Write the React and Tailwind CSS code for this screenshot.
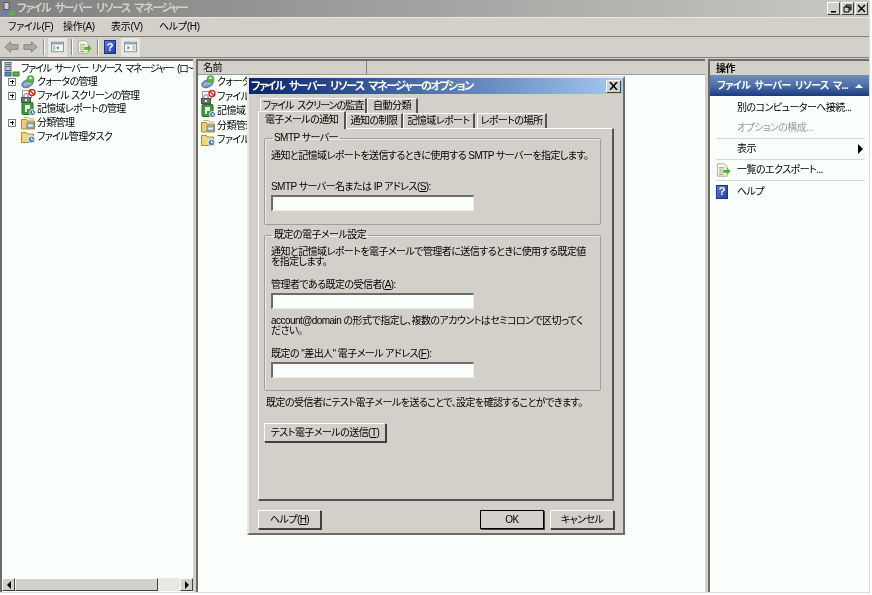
const bevel = "border border-t-white border-l-white border-r-[#404040] border-b-[#404040] bg-[#d2d0c8]";
const sunken = "border border-t-[#6c6c68] border-l-[#6c6c68] border-r-[#ecebe6] border-b-[#ecebe6] bg-[#fbfffb]";
const jp = "font-['Liberation_Sans','Noto_Sans_CJK_JP',sans-serif] [font-feature-settings:'palt'] tracking-[-0.55px]";

function GrayArrow({ flip }) {
  return (
    <svg width="15" height="14" viewBox="0 0 16 14" className={flip ? "-scale-x-100" : ""}>
      <path d="M1 7 7 1.500V4.500H15V9.500H7V12.500Z" fill="#aaa9a2" stroke="#84837c" />
    </svg>
  );
}

function PaneIcon({ right }) {
  return (
    <svg width="13" height="14" viewBox="0 0 15 14">
      <rect x="0.500" y="1.500" width="14" height="11" fill="#f3f6f6" stroke="#7c8a94" />
      <rect x="1" y="2" width="13" height="2" fill="#8ea3b3" />
      <rect x={right ? 10 : 2} y="5" width="3" height="6" fill="#bcc7cc" />
      <path d={right ? "M4 6v4l3-2z" : "M9 6v4l-3-2z"} fill="#3d9a3d" />
    </svg>
  );
}

function ExportIcon() {
  return (
    <svg width="15" height="14" viewBox="0 0 17 15">
      <path d="M1.500.5h8l3 3v11h-11z" fill="#f8f6e6" stroke="#a8a480" />
      <path d="M3.500 5h6M3.500 7.500h4M3.500 10h4M3.500 12.500h5" stroke="#8a8a70" />
      <path d="M8 7.500h4.500V5l4 4-4 4v-2.500H8z" fill="#4fb52f" />
    </svg>
  );
}

function HelpIcon() {
  return (
    <div className="flex h-[14px] w-[12px] items-center justify-center border border-[#20308a] bg-gradient-to-br from-[#5d78d8] to-[#2a3fa8] text-[11px] font-bold tracking-normal text-white">
      ?
    </div>
  );
}

function NodeIcon({ kind }) {
  if (kind === "quota") {
    return (
      <svg width="15" height="14" viewBox="0 0 15 14" className="shrink-0">
        <path d="M1 8.500c1-3 8-5 11-3 1 2-1 6-6 7-3 1-6-1-5-4z" fill="#7f9cc4" stroke="#50688c" />
        <path d="M3 10c2-1 5-2 7-2" stroke="#dbe5f0" />
        <circle cx="9.500" cy="4" r="3.500" fill="#57b83e" stroke="#3b8a2a" strokeWidth=".5" />
        <path d="M9.500 1.500l2 2.500h-4z" fill="#e8f6df" />
      </svg>
    );
  }
  if (kind === "screen") {
    return (
      <svg width="15" height="14" viewBox="0 0 15 14" className="shrink-0">
        <rect x="1.500" y="1.500" width="9" height="7" fill="#fbfbf8" stroke="#9a9a98" />
        <rect x="0.500" y="8.500" width="9" height="5" fill="#6f7275" stroke="#4a4d50" />
        <path d="M3 8.500V6.500c0-2.500 4-2.500 4 0v2" fill="none" stroke="#5d6063" />
        <rect x="4" y="10" width="2" height="2" fill="#e6e6e0" />
        <circle cx="11" cy="3.500" r="3" fill="#fff" stroke="#d0281e" strokeWidth="1.500" />
        <path d="M9 1.500l4 4" stroke="#d0281e" strokeWidth="1.500" />
      </svg>
    );
  }
  if (kind === "report") {
    return (
      <svg width="15" height="14" viewBox="0 0 15 14" className="shrink-0">
        <rect x="1" y="0.500" width="11" height="12" rx="1" fill="#3f9a3a" stroke="#24702a" />
        <path d="M4 3h5v4H6v3H4z" fill="#eaf5e2" />
        <circle cx="11.500" cy="10.500" r="3" fill="#4a7dbc" stroke="#f4f8fa" />
        <path d="M11.500 9v2h1.500" stroke="#fff" fill="none" />
      </svg>
    );
  }
  if (kind === "class") {
    return (
      <svg width="15" height="14" viewBox="0 0 15 14" className="shrink-0">
        <path d="M.5 3.500h5l1 1.500h7v8h-13z" fill="#e8cd7a" stroke="#a98d3b" />
        <path d="M2.500 1.500h5l1 1.500h5" fill="none" stroke="#c9ad58" />
        <rect x="6" y="7" width="7" height="5" fill="#b8c6cf" stroke="#6f7f8a" />
        <path d="M7.500 9.500h4" stroke="#fff" />
      </svg>
    );
  }
  return (
    <svg width="15" height="14" viewBox="0 0 15 14" className="shrink-0">
      <path d="M.5 2.500h5l1 1.500h6v8.500h-12z" fill="#f0d77e" stroke="#a98d3b" />
      <circle cx="10.500" cy="9.500" r="3.500" fill="#4f84c0" stroke="#f4f8fa" />
      <path d="M10.500 7.500v2.200h2" stroke="#fff" fill="none" />
    </svg>
  );
}

function Expander() {
  return (
    <div className="relative h-[8px] w-[8px] border border-[#808080] bg-white">
      <div className="absolute top-[2.500px] left-[1px] h-px w-[4px] bg-black" />
      <div className="absolute top-[1px] left-[2.500px] h-[4px] w-px bg-black" />
    </div>
  );
}

const treeRows = [
  { kind: "quota", label: "クォータの管理", expand: true },
  { kind: "screen", label: "ファイル スクリーンの管理", expand: true },
  { kind: "report", label: "記憶域レポートの管理" },
  { kind: "class", label: "分類管理", expand: true },
  { kind: "task", label: "ファイル管理タスク" },
];

function TreePane() {
  return (
    <div className="flex w-[193px] shrink-0 flex-col overflow-hidden border-l-2 border-t-2 border-[#6c6c68] bg-[#fbfffb]">
      <div className="flex h-[14px] items-center pt-[2px] pl-[2px]">
        <svg width="16" height="15" viewBox="0 0 16 15" className="shrink-0">
          <rect x="1" y="0.500" width="6" height="8" fill="#b9c6d2" stroke="#5b6a78" />
          <path d="M2 2.500h4M2 4.500h4" stroke="#5b6a78" />
          <rect x="1" y="10" width="6" height="4" fill="#5d87b8" stroke="#3d5b80" />
          <rect x="9" y="10" width="6" height="4" fill="#5fae4d" stroke="#3d7e32" />
        </svg>
        <span className="ml-[1px] whitespace-nowrap text-[10px] leading-none tracking-[-1.2px] text-black [word-spacing:2px]">ファイル サーバー リソース マネージャー (ロ~</span>
      </div>
      <div className="flex flex-col tracking-[-0.7px]">
        {treeRows.map((row) => (
          <div key={row.label} className="flex h-[13.700px] items-center">
            <div className="ml-[6px] w-[13px] shrink-0">{row.expand && <Expander />}</div>
            <NodeIcon kind={row.kind} />
            <span className="ml-[1px] whitespace-nowrap text-[10px] leading-none text-black">{row.label}</span>
          </div>
        ))}
      </div>
      <div className="mt-auto mb-[1px] flex h-[13px] items-stretch bg-[#e8e7e2]">
        <div className={`${bevel} flex w-[13px] items-center justify-center`}>
          <div className="h-0 w-0 border-y-[4px] border-r-[4px] border-y-transparent border-r-black" />
        </div>
        <div className={`${bevel} w-[143px]`} />
        <div className="flex-1" />
        <div className={`${bevel} flex w-[13px] items-center justify-center`}>
          <div className="h-0 w-0 border-y-[4px] border-l-[4px] border-y-transparent border-l-black" />
        </div>
      </div>
    </div>
  );
}

function ListPane() {
  return (
    <div className="flex w-[509px] shrink-0 flex-col overflow-hidden border-l-2 border-t-2 border-[#6c6c68] bg-[#fbfffb]">
      <div className="flex h-[14px] shrink-0 border-b border-[#9b9a94] bg-[#d2d0c8] text-[10px] leading-none">
        <div className="flex w-[169px] items-center border-r border-[#808080] pl-[5px]">名前</div>
        <div className="flex-1" />
      </div>
      <div className="flex flex-col pl-[3px]">
        {["quota", "screen", "report", "class", "task"].map((kind, i) => (
          <div key={kind} className="flex h-[14.500px] items-center">
            <NodeIcon kind={kind} />
            <span className="ml-[1px] whitespace-nowrap text-[10px] leading-none">{["クォータの管理", "ファイル スクリーン", "記憶域レポート", "分類管理", "ファイル管理タスク"][i]}</span>
          </div>
        ))}
      </div>
    </div>
  );
}

function ActionRow({ icon, label, gray, arrow, line }) {
  return (
    <div className={`flex h-[21px] items-center ${line ? "border-b border-[#d8d7d2]" : ""}`}>
      <div className="flex w-[21px] shrink-0">{icon}</div>
      <span className={`whitespace-nowrap text-[10px] leading-none ${gray ? "text-[#9a9a9a]" : "text-black"}`}>{label}</span>
      {arrow && <div className="mr-[2px] ml-auto h-0 w-0 border-y-[5px] border-l-[5px] border-y-transparent border-l-black" />}
    </div>
  );
}

function ActionPane() {
  return (
    <div className="flex flex-1 flex-col overflow-hidden border-l-2 border-t-2 border-[#6c6c68] bg-[#fbfffb]">
      <div className="flex h-[14px] shrink-0 items-center bg-[#d2d0c8] pt-[2px] pl-[6px] text-[10px] leading-none font-bold">操作</div>
      <div className="flex h-[21px] shrink-0 items-center bg-gradient-to-b from-[#6d8fc0] via-[#4d6fa8] to-[#1c3a80] pl-[7px] text-[10px] leading-none font-bold tracking-[-0.6px] text-white [word-spacing:2px]">
        <span className="whitespace-nowrap">ファイル サーバー リソース マ...</span>
        <div className="mr-[6px] ml-auto h-0 w-0 border-x-[4px] border-b-[4px] border-x-transparent border-b-white" />
      </div>
      <div className="mt-[1px] flex flex-col pr-[4px] pl-[6px]">
        <ActionRow label="別のコンピューターへ接続..." />
        <ActionRow label="オプションの構成..." gray line />
        <ActionRow label="表示" arrow line />
        <ActionRow label="一覧のエクスポート..." icon={<ExportIcon />} line />
        <ActionRow label="ヘルプ" icon={<HelpIcon />} />
      </div>
    </div>
  );
}

function Tab({ label, width, active, tight }) {
  return (
    <div
      className={`flex shrink-0 items-center justify-center whitespace-nowrap border-t border-l border-r-2 border-t-white border-l-white border-r-[#555] bg-[#d2d0c8] text-[10px] leading-none ${tight ? "tracking-[-1px] [word-spacing:2px]" : ""} ${width} ${active ? "relative z-10 -mt-[2px] h-[18px] pb-[1px]" : "h-[15px]"}`}
    >
      {label}
    </div>
  );
}

function Field() {
  return <div className={`${sunken} mt-[3px] h-[16px] w-[203px] border-t-2 border-l-2`} />;
}

function Group({ title, height, className, children }) {
  return (
    <fieldset className={`rounded-[2px] border border-[#9f9e98] px-[6px] shadow-[inset_1px_1px_0_#ecebe6] ${height} ${className || ""}`}>
      <legend className="ml-[1px] px-[2px] text-[10px] leading-[12px]">{title}</legend>
      {children}
    </fieldset>
  );
}

function DialogButton({ label, width, strong }) {
  return (
    <div
      className={`flex h-[19px] items-center justify-center whitespace-nowrap border text-[10px] leading-none shadow-[1px_1px_0_#404040] ${width} ${strong ? "border-black bg-[#d2d0c8]" : bevel}`}
    >
      {label}
    </div>
  );
}

function OptionsDialog() {
  return (
    <div className="absolute top-[76px] left-[247px] flex h-[459px] w-[378px] flex-col border-2 border-t-[#e8e7e2] border-l-[#e8e7e2] border-r-[#6c6c68] border-b-[#6c6c68] bg-[#d2d0c8]">
      <div className="flex h-[16px] shrink-0 items-center bg-gradient-to-r from-[#0a246a] to-[#a6caf0] pl-[2px] text-[11px] leading-none font-bold tracking-[-1.5px] text-white [word-spacing:3px]">
        <span className="whitespace-nowrap">ファイル サーバー リソース マネージャーのオプション</span>
        <div className={`${bevel} mr-[2px] ml-auto flex h-[13px] w-[15px] items-center justify-center text-black`}>
          <svg width="9" height="8" viewBox="0 0 9 8">
            <path d="M1 0 8 8M8 0 1 8" stroke="#000" strokeWidth="1.500" />
          </svg>
        </div>
      </div>

      <div className="mt-[4px] flex flex-1 flex-col px-[9px]">
        <div className="ml-[2px] flex h-[15px] items-start">
          <Tab label="ファイル スクリーンの監査" width="w-[107px]" tight />
          <Tab label="自動分類" width="w-[51px]" />
        </div>
        <div className="flex h-[15px] items-start">
          <Tab label="電子メールの通知" width="w-[88px]" active />
          <Tab label="通知の制限" width="w-[57px]" />
          <Tab label="記憶域レポート" width="w-[72px]" />
          <div className="w-[2px]" />
          <Tab label="レポートの場所" width="w-[70px]" />
        </div>
        <div className="flex h-[373px] flex-col border border-t-white border-l-white border-r-2 border-b-2 border-r-[#555] border-b-[#555] px-[5px] pt-[3px]">
          <Group title="SMTP サーバー" height="h-[93px] w-[337px]">
            <p className="mt-[6px] whitespace-nowrap text-[10px] leading-[11px]">通知と記憶域レポートを送信するときに使用する SMTP サーバーを指定します。</p>
            <p className="mt-[20px] text-[10px] leading-[11px]">SMTP サーバー名または IP アドレス(<u>S</u>):</p>
            <Field />
          </Group>
          <Group title="既定の電子メール設定" height="h-[162px] w-[337px]" className="mt-[4px]">
            <p className="mt-[6px] text-[10px] leading-[10px]">通知と記憶域レポートを電子メールで管理者に送信するときに使用する既定値を指定します。</p>
            <p className="mt-[12px] text-[10px] leading-[11px]">管理者である既定の受信者(<u>A</u>):</p>
            <Field />
            <p className="mt-[7px] text-[10px] leading-[10px]">account@domain の形式で指定し、複数のアカウントはセミコロンで区切ってく<br />ださい。</p>
            <p className="mt-[12px] text-[10px] leading-[11px]">既定の "差出人" 電子メール アドレス(<u>F</u>):</p>
            <Field />
          </Group>
          <p className="mt-[6px] ml-[2px] whitespace-nowrap text-[10px] leading-[11px]">既定の受信者にテスト電子メールを送ることで、設定を確認することができます。</p>
          <div className="mt-[15px]">
            <DialogButton label={<span>テスト電子メールの送信(<u>T</u>)</span>} width="w-[122px]" />
          </div>
        </div>
        <div className="mt-[9px] flex">
          <DialogButton label={<span>ヘルプ(<u>H</u>)</span>} width="w-[63px]" />
          <div className="ml-auto flex gap-[6px]">
            <DialogButton label="OK" width="w-[64px]" strong />
            <DialogButton label="キャンセル" width="w-[64px]" />
          </div>
        </div>
      </div>
    </div>
  );
}

export default function App() {
  return (
    <div className={`h-[595px] w-[872px] overflow-hidden bg-white text-black blur-[0.3px] ${jp}`}>
      <div className="relative flex h-[593px] w-[870px] flex-col border-r border-b border-r-[#dcdcd8] border-b-[#dcdcd8] bg-[#d2d0c8]">
        <div className="flex h-[17px] shrink-0 items-center bg-gradient-to-r from-[#808080] to-[#c8c8c4] pl-[2px]">
          <svg width="14" height="14" viewBox="0 0 14 14">
            <rect x="2" y="0.500" width="5" height="7" fill="#c8d0d8" stroke="#505a64" />
            <rect x="1" y="9" width="5" height="4" fill="#5d87b8" />
            <rect x="8" y="9" width="5" height="4" fill="#5fae4d" />
          </svg>
          <span className="ml-[1px] whitespace-nowrap text-[11px] leading-none font-bold tracking-[-1.5px] text-[#d4d0c8] [word-spacing:3px]">ファイル サーバー リソース マネージャー</span>
          <div className="mr-[1px] ml-auto flex gap-[1px]">
            {[
              <path key="min" d="M2 7h5v1.500H2z" />,
              <path key="max" d="M3 1h5v5H7V3H3zM1 3h5v5H1z" fill="none" stroke="#000" />,
              <path key="x" d="M1 1l7 7M8 1 1 8" stroke="#000" strokeWidth="1.500" />,
            ].map((icon) => (
              <div key={icon.key} className={`${bevel} flex h-[13px] w-[13px] items-center justify-center`}>
                <svg width="9" height="9" viewBox="0 0 9 9">{icon}</svg>
              </div>
            ))}
          </div>
        </div>

        <div className="flex h-[20px] shrink-0 items-center border-y border-t-[#e8e7e2] border-b-[#808080] pl-[8px] text-[10px] leading-none tracking-[-0.3px]">
          <span className="w-[55px]">ファイル(F)</span>
          <span className="w-[48px]">操作(A)</span>
          <span className="w-[48px]">表示(V)</span>
          <span>ヘルプ(H)</span>
        </div>

        <div className="flex h-[21px] shrink-0 items-center border-b border-[#808080] pl-[4px]">
          <GrayArrow />
          <div className="ml-[4px]"><GrayArrow flip /></div>
          <div className="ml-[5px] h-[16px] w-[2px] border-x border-l-[#8a8a86] border-r-white" />
          <div className="ml-[3px] flex h-[19px] w-[19px] items-center justify-center bg-[#e8e7e2]"><PaneIcon /></div>
          <div className="ml-[4px] h-[16px] w-[2px] border-x border-l-[#8a8a86] border-r-white" />
          <div className="ml-[4px]"><ExportIcon /></div>
          <div className="ml-[5px] h-[16px] w-[2px] border-x border-l-[#8a8a86] border-r-white" />
          <div className="ml-[5px]"><HelpIcon /></div>
          <div className="ml-[5px] flex h-[19px] w-[19px] items-center justify-center bg-[#e8e7e2]"><PaneIcon right /></div>
        </div>

        <div className="mt-[1px] flex min-h-0 flex-1 gap-[3px]">
          <TreePane />
          <ListPane />
          <ActionPane />
        </div>

        <OptionsDialog />
      </div>
    </div>
  );
}
